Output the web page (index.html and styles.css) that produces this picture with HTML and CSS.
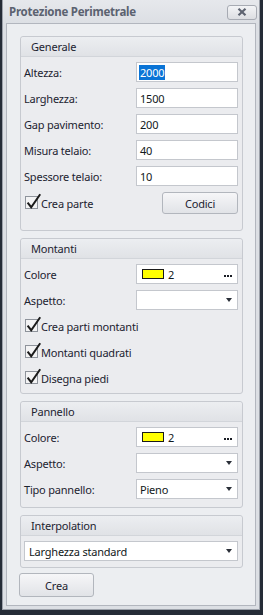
FILE: index.html
```html
<!DOCTYPE html>
<html lang="it">
<head>
<meta charset="utf-8">
<title>Protezione Perimetrale</title>
<link rel="stylesheet" href="styles.css">
</head>
<body>
<div class="window">
  <div class="titlebar">
    <span class="title">Protezione Perimetrale</span>
    <button class="close" type="button" aria-label="Chiudi">
      <svg width="10" height="8" viewBox="0 0 10 8"><path d="M1.5 0.8 L8.5 7.2 M8.5 0.8 L1.5 7.2" stroke="#5e6471" stroke-width="2.2" fill="none"/></svg>
    </button>
  </div>
  <div class="content">
    <div class="group g-generale">
      <div class="group-header">Generale</div>
      <div class="group-body">
        <div class="row"><span class="label">Altezza:</span><div class="field"><span class="selected">2000</span></div></div>
        <div class="row"><span class="label">Larghezza:</span><div class="field">1500</div></div>
        <div class="row"><span class="label">Gap pavimento:</span><div class="field">200</div></div>
        <div class="row"><span class="label">Misura telaio:</span><div class="field">40</div></div>
        <div class="row"><span class="label">Spessore telaio:</span><div class="field">10</div></div>
        <div class="row row-btn">
          <span class="check"><svg class="cb" width="17" height="17" viewBox="0 0 17 17"><rect x="0.5" y="3.5" width="12" height="12" fill="#f3f3f4" stroke="#8e939b"/><path d="M2.6 9.6 L6.2 14.2 L15.2 1.2" stroke="#1b1b1b" stroke-width="2" fill="none"/></svg>Crea parte</span>
          <button class="btn btn-codici" type="button">Codici</button>
        </div>
      </div>
    </div>

    <div class="group g-montanti">
      <div class="group-header">Montanti</div>
      <div class="group-body">
        <div class="row"><span class="label">Colore</span><div class="field field-color"><span class="swatch"></span><span class="cnum">2</span><span class="dots"><i></i><i></i><i></i></span></div></div>
        <div class="row"><span class="label">Aspetto:</span><div class="field field-select"><span></span><span class="arrow"></span></div></div>
        <div class="row"><span class="check"><svg class="cb" width="17" height="17" viewBox="0 0 17 17"><rect x="0.5" y="3.5" width="12" height="12" fill="#f3f3f4" stroke="#8e939b"/><path d="M2.6 9.6 L6.2 14.2 L15.2 1.2" stroke="#1b1b1b" stroke-width="2" fill="none"/></svg>Crea parti montanti</span></div>
        <div class="row"><span class="check"><svg class="cb" width="17" height="17" viewBox="0 0 17 17"><rect x="0.5" y="3.5" width="12" height="12" fill="#f3f3f4" stroke="#8e939b"/><path d="M2.6 9.6 L6.2 14.2 L15.2 1.2" stroke="#1b1b1b" stroke-width="2" fill="none"/></svg>Montanti quadrati</span></div>
        <div class="row"><span class="check"><svg class="cb" width="17" height="17" viewBox="0 0 17 17"><rect x="0.5" y="3.5" width="12" height="12" fill="#f3f3f4" stroke="#8e939b"/><path d="M2.6 9.6 L6.2 14.2 L15.2 1.2" stroke="#1b1b1b" stroke-width="2" fill="none"/></svg>Disegna piedi</span></div>
      </div>
    </div>

    <div class="group g-pannello">
      <div class="group-header">Pannello</div>
      <div class="group-body">
        <div class="row"><span class="label">Colore:</span><div class="field field-color"><span class="swatch"></span><span class="cnum">2</span><span class="dots"><i></i><i></i><i></i></span></div></div>
        <div class="row"><span class="label">Aspetto:</span><div class="field field-select"><span></span><span class="arrow"></span></div></div>
        <div class="row"><span class="label">Tipo pannello:</span><div class="field field-select"><span>Pieno</span><span class="arrow"></span></div></div>
      </div>
    </div>

    <div class="group g-interp">
      <div class="group-header">Interpolation</div>
      <div class="group-body">
        <div class="row"><div class="field field-select field-wide"><span>Larghezza standard</span><span class="arrow"></span></div></div>
      </div>
    </div>

    <button class="btn btn-crea" type="button">Crea</button>
  </div>
</div>
</body>
</html>
```

FILE: styles.css
```css
html, body {
  margin: 0;
  padding: 0;
}

body {
  background: #252c37;
  font-family: "Noto Sans", "DejaVu Sans", sans-serif;
  font-size: 11px;
  letter-spacing: -0.2px;
  color: #1c2330;
}

.window {
  margin-left: 2px;
  width: 258px;
  height: 610px;
  box-sizing: border-box;
  border: 1px solid #9ca1aa;
  border-top: none;
  background: #dcdfe4;
  display: flex;
  flex-direction: column;
}

.titlebar {
  height: 23px;
  flex: none;
  display: flex;
  align-items: center;
  justify-content: space-between;
  padding: 0 2px 0 6px;
  background: linear-gradient(#e6e8ec, #dcdfe4);
}

.title {
  font-weight: bold;
  font-size: 11.5px;
  letter-spacing: -0.25px;
  color: #5b6270;
}

.close {
  width: 30px;
  height: 15px;
  margin-top: 1px;
  padding: 0;
  border: 1px solid #a7abb3;
  border-radius: 3px;
  background: linear-gradient(#f3f4f6, #dcdee2);
  display: flex;
  align-items: center;
  justify-content: center;
}

.content {
  flex: 1;
  margin: 0 3px 3px 3px;
  border: 1px solid #b2b6be;
  background: #eceef1;
  padding: 12px 12px 7px 13px;
  display: flex;
  flex-direction: column;
  align-items: flex-start;
}

.group {
  align-self: stretch;
  border: 1px solid #c7cad0;
  border-radius: 3px;
  background: #ebecef;
  margin-bottom: 7px;
}

.group-header {
  height: 19px;
  line-height: 19px;
  padding-left: 10px;
  border-bottom: 1px solid #d2d5da;
  border-radius: 3px 3px 0 0;
  background: linear-gradient(#eceef1, #e0e2e6);
}

.group-body {
  padding: 5px 4px 0 3px;
}

.g-generale .group-body { padding-bottom: 16px; }
.g-montanti .group-body { padding-bottom: 5px; }
.g-pannello .group-body { padding-bottom: 8px; }
.g-interp { margin-bottom: 5px; }
.g-interp .group-body { padding-bottom: 6px; }

.row {
  height: 20px;
  display: flex;
  align-items: center;
  justify-content: space-between;
  margin-bottom: 6px;
}

.row:last-child {
  margin-bottom: 0;
}

.row-btn {
  height: 22px;
}

.label {
  white-space: nowrap;
}

.field {
  width: 102px;
  height: 20px;
  box-sizing: border-box;
  border: 1px solid #c4c7cd;
  background: #ffffff;
  padding: 0 5px 0 3px;
  display: flex;
  align-items: center;
  color: #111820;
}

.field-wide {
  width: 100%;
  padding-left: 4px;
}

.selected {
  background: #0a74d6;
  color: #ffffff;
  padding: 0 1px;
  margin-left: -1px;
}

.field-select {
  justify-content: space-between;
}

.arrow {
  width: 0;
  height: 0;
  border-left: 3.5px solid transparent;
  border-right: 3.5px solid transparent;
  border-top: 4px solid #2a2f38;
}

.field-color {
  padding-left: 5px;
}

.swatch {
  width: 20px;
  height: 8px;
  background: #ffff00;
  border: 1px solid #1a1a1a;
  flex: none;
}

.cnum {
  margin-left: 4px;
  flex: 1;
}

.dots {
  display: flex;
  gap: 1px;
  margin-top: 3px;
}

.dots i {
  display: block;
  width: 2px;
  height: 2px;
  background: #1a1d24;
}

.check {
  display: flex;
  align-items: center;
  white-space: nowrap;
  margin-left: 1px;
}

.cb {
  flex: none;
  margin-top: -3px;
  margin-right: -1px;
}

.btn {
  font-family: inherit;
  font-size: inherit;
  letter-spacing: inherit;
  color: #1c2330;
  border: 1px solid #b2b6bd;
  border-radius: 3px;
  background: linear-gradient(#f6f6f8, #e1e3e7);
  padding: 0;
}

.btn-codici {
  width: 76px;
  height: 22px;
}

.btn-crea {
  width: 75px;
  height: 24px;
  margin-left: -1px;
}
```
